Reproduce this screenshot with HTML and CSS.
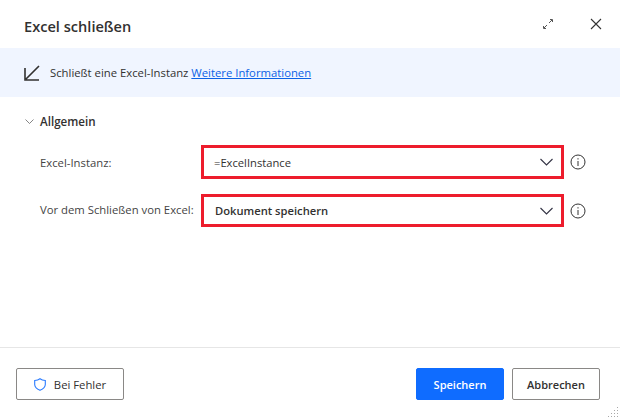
FILE: index.html
```html
<!DOCTYPE html>
<html lang="de">
<head>
	<meta charset="UTF-8">
	<title>Excel schließen</title>
	<link rel="stylesheet" href="styles.css">
</head>
<body>
	<div class="dialog">
		<header class="head">
			<h1>Excel schließen</h1>
			<div class="head-icons">
				<svg width="10" height="10" viewBox="0 0 10 10" fill="none" stroke="#555" stroke-width="1"><path d="M1 9 4 6M6 4l3-3M.5 7v2.500H3M7 .500h2.500V3"/></svg>
				<svg width="12" height="12" viewBox="0 0 12 12" fill="none" stroke="#333" stroke-width="1.100"><path d="M1 1l10 10M11 1 1 11"/></svg>
			</div>
		</header>
		<div class="banner">
			<svg width="16" height="16" viewBox="0 0 16 16" fill="none" stroke="#323130" stroke-width="1.600"><path d="M15 1 2 14M1 3v12h14"/></svg>
			<span>Schließt eine Excel-Instanz <a href="#">Weitere Informationen</a></span>
		</div>
		<main class="body">
			<div class="section">
				<svg width="9" height="9" viewBox="0 0 9 9" fill="none" stroke="#666" stroke-width="0.800"><path d="M.5 2.500 4.500 6.500l4-4"/></svg>
				<span>Allgemein</span>
			</div>
			<div class="row">
				<label>Excel-Instanz:</label>
				<div class="field">
					<span>=ExcelInstance</span>
					<svg class="chev" width="13" height="8" viewBox="0 0 13 8" fill="none" stroke="#334" stroke-width="1.100"><path d="M.5 1l6 6 6-6"/></svg>
				</div>
				<svg class="info" width="16" height="16" viewBox="0 0 16 16" fill="none" stroke="#333" stroke-width="1"><circle cx="8" cy="8" r="7"/><path d="M8 7v5M8 4.200v1.300"/></svg>
			</div>
			<div class="row row-tight">
				<label>Vor dem Schließen von Excel:</label>
				<div class="field field-bold">
					<span>Dokument speichern</span>
					<svg class="chev" width="13" height="8" viewBox="0 0 13 8" fill="none" stroke="#334" stroke-width="1.100"><path d="M.5 1l6 6 6-6"/></svg>
				</div>
				<svg class="info" width="16" height="16" viewBox="0 0 16 16" fill="none" stroke="#333" stroke-width="1"><circle cx="8" cy="8" r="7"/><path d="M8 7v5M8 4.200v1.300"/></svg>
			</div>
		</main>
		<footer class="foot">
			<button class="btn btn-error">
				<svg width="12" height="13" viewBox="0 0 12 13" fill="none" stroke="#2a7bff" stroke-width="1.100"><path d="M6 .7C7.500 1.900 9.300 2.400 11.300 2.500V6.500c0 2.800-2.300 4.500-5.300 5.800C3 11 .7 9.300.7 6.500V2.500C2.700 2.400 4.500 1.900 6 .7Z"/></svg>
				Bei Fehler
			</button>
			<div class="foot-right">
				<button class="btn btn-primary">Speichern</button>
				<button class="btn">Abbrechen</button>
			</div>
		</footer>
		<svg class="grip" width="12" height="12" viewBox="0 0 12 12" fill="#a8a8a8"><rect x="10" y="1" width="1" height="1"/><rect x="7" y="4" width="1" height="1"/><rect x="10" y="4" width="1" height="1"/><rect x="4" y="7" width="1" height="1"/><rect x="7" y="7" width="1" height="1"/><rect x="10" y="7" width="1" height="1"/><rect x="1" y="10" width="1" height="1"/><rect x="4" y="10" width="1" height="1"/><rect x="7" y="10" width="1" height="1"/><rect x="10" y="10" width="1" height="1"/></svg>
	</div>
</body>
</html>
```

FILE: styles.css
```css
* { box-sizing: border-box }
html, body { height: 100% }
body {
	margin: 0;
	background: #fff;
	color: #323130;
	font-family: "Open Sans", "Noto Sans", sans-serif;
	font-size: 11.300px;
}
.dialog {
	position: relative;
	display: flex;
	flex-direction: column;
	width: 620px;
	height: 420px;
	overflow: hidden;
}
.head {
	display: flex;
	align-items: center;
	justify-content: space-between;
	height: 48px;
	padding: 3px 18px 0 24px;
}
h1 {
	margin: 0;
	font-size: 14.600px;
	font-weight: 600;
}
.head-icons {
	display: flex;
	align-items: center;
	gap: 37px;
	margin-top: -4px;
}
.banner {
	display: flex;
	align-items: center;
	gap: 10px;
	height: 49px;
	padding-left: 24px;
	background: #f0f5ff;
}
.banner a { color: #0b62e6 }
.body {
	flex: 1;
	padding: 0 34px 0 25px;
}
.section {
	display: flex;
	align-items: center;
	gap: 6px;
	height: 20px;
	margin: 14px 0 14px;
	font-size: 11.600px;
	font-weight: 600;
}
.row {
	display: flex;
	align-items: center;
	height: 34px;
	margin-bottom: 15px;
}
.row label {
	width: 161px;
	margin-left: 15px;
	color: #444;
}
.row-tight { height: 33px }
.row-tight label { margin-top: -2px }
.field {
	display: flex;
	align-items: center;
	justify-content: space-between;
	width: 363px;
	height: 100%;
	padding: 0 8px 0 10px;
	border: 3px solid #ed1c2c;
	font-size: 11.200px;
}
.field-bold {
	padding-left: 11px;
	font-weight: 600;
}
.info { margin-left: 6px }
.foot {
	display: flex;
	align-items: flex-start;
	justify-content: space-between;
	height: 73px;
	padding: 20px 20px 0 16px;
	border-top: 1px solid #e6e6e6;
}
.foot-right {
	display: flex;
	gap: 8px;
}
.btn {
	display: flex;
	align-items: center;
	justify-content: center;
	width: 88px;
	height: 32px;
	background: #fff;
	border: 1px solid #8a8886;
	border-radius: 2px;
	color: #323130;
	font: 600 11px "Open Sans", "Noto Sans", sans-serif;
}
.btn-error {
	gap: 8px;
	width: 108px;
	font-size: 11.300px;
	font-weight: 400;
}
.btn-primary {
	background: #0f6cff;
	border-color: #0f6cff;
	color: #fff;
}
.grip {
	position: absolute;
	right: 1px;
	bottom: 2px;
}
```
